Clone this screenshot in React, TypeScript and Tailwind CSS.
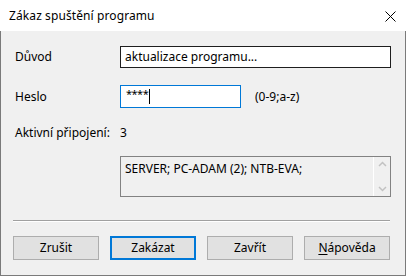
const font = { fontFamily: '"Noto Sans", "Liberation Sans", sans-serif' }

function Btn({ children, primary }: { children: React.ReactNode; primary?: boolean }) {
  return (
    <button
      className={`w-[86px] h-6 flex items-center justify-center bg-[#e1e1e1] text-[12px] text-black ${
        primary ? 'border-2 border-[#0078d7]' : 'border border-[#adadad]'
      }`}
    >
      {children}
    </button>
  )
}

export default function App() {
  return (
    <div className="w-[406px] h-[276px] flex flex-col bg-[#f0f0f0] text-[12px] text-black" style={font}>
      <div className="h-[31px] bg-white flex items-center justify-between pl-[9px] pr-[10px] shrink-0">
        <span className="text-[12px] tracking-[0.1px]">Zákaz spuštění programu</span>
        <svg width="11" height="11" viewBox="0 0 11 11" stroke="#000" strokeWidth="1" className="mt-px">
          <path d="M0.5 0.5 L10.5 10.5 M10.5 0.5 L0.5 10.5" />
        </svg>
      </div>

      <div className="flex-1 flex flex-col border-x border-b border-[#7a7a7a] pl-[14px] pr-[14px]">
        <div className="mt-[15px] flex items-center h-[22px]">
          <span className="w-[105px]">Důvod</span>
          <div className="w-[271px] h-[22px] border border-[#1e1e1e] bg-white flex items-center pl-[4px]">
            aktualizace programu...
          </div>
        </div>

        <div className="mt-[17px] flex items-center h-[23px]">
          <span className="w-[105px]">Heslo</span>
          <div className="w-[121px] h-[23px] border border-[#0078d7] bg-white flex items-center pl-[5px]">
            <span className="text-[11px] -mt-[4px] tracking-[-0.5px]">****</span>
            <span className="w-px h-[15px] bg-black ml-[1px]" />
          </div>
          <span className="ml-[14px]">(0-9;a-z)</span>
        </div>

        <div className="mt-[17px] flex items-center h-4">
          <span className="w-[105px]">Aktivní připojení:</span>
          <span>3</span>
        </div>

        <div className="mt-[15px] ml-[105px] w-[271px] h-[41px] border border-[#828282] bg-[#f0f0f0] flex">
          <div className="flex-1 pl-[4px] pt-[3px]">SERVER; PC-ADAM (2); NTB-EVA;</div>
          <div className="w-[17px] border-l border-white flex flex-col items-center justify-between py-[4px] text-[#c2c2c2]">
            <svg width="9" height="6" viewBox="0 0 9 6" fill="none" stroke="currentColor" strokeWidth="1.5">
              <path d="M1 5 L4.5 1.5 L8 5" />
            </svg>
            <svg width="9" height="6" viewBox="0 0 9 6" fill="none" stroke="currentColor" strokeWidth="1.5">
              <path d="M1 1 L4.5 4.5 L8 1" />
            </svg>
          </div>
        </div>

        <div className="mt-[23px] -ml-[2px] w-[377px] h-px bg-[#a0a0a0] border-b border-white box-content" />

        <div className="mt-[14px] -ml-[2px] w-[377px] flex justify-between">
          <Btn>Zrušit</Btn>
          <Btn primary>Zakázat</Btn>
          <Btn>Zavřít</Btn>
          <Btn>
            <span className="underline underline-offset-2">N</span>ápověda
          </Btn>
        </div>
      </div>
    </div>
  )
}
